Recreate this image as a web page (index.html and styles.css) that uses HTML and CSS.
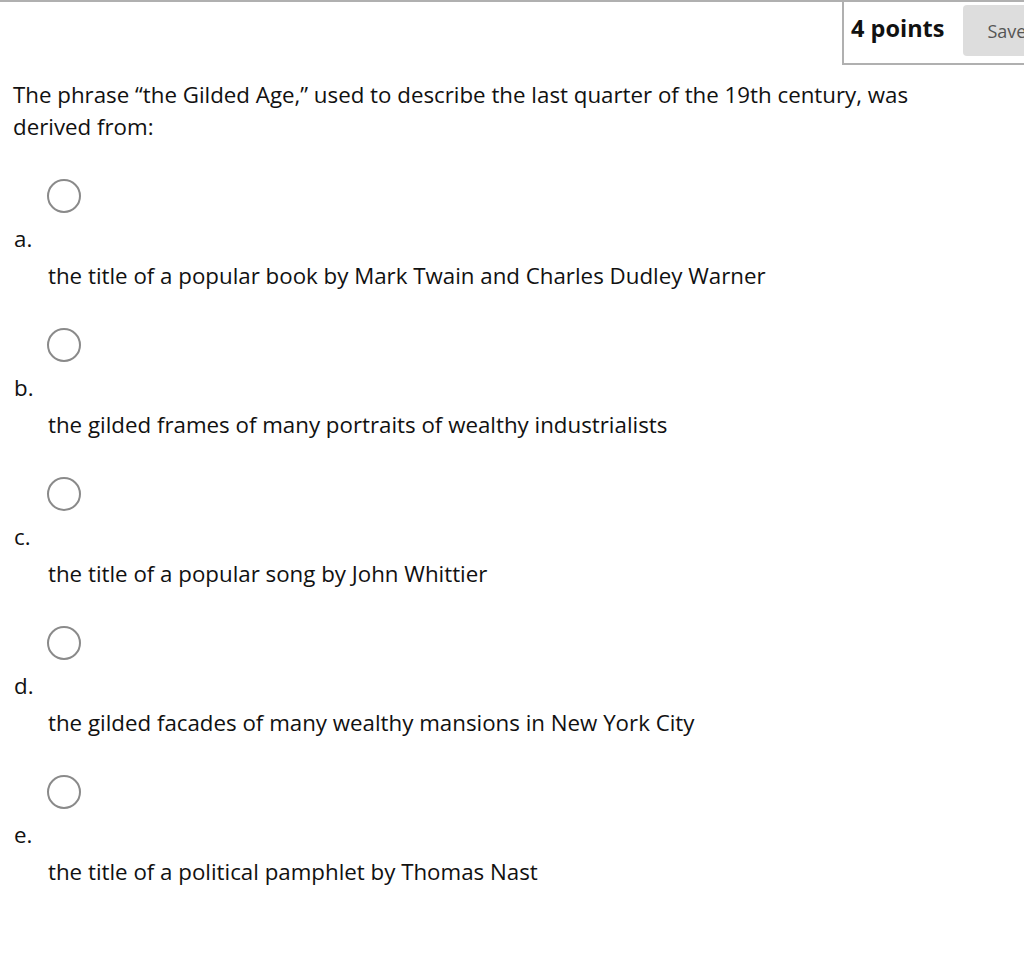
FILE: index.html
```html
<!DOCTYPE html>
<html>
<head>
<meta charset="utf-8">
<link rel="stylesheet" href="styles.css">
</head>
<body>
<div class="question">
  <div class="q-header">
    <div class="points-box">
      <span class="points">4 points</span>
      <button class="save-btn">Save Answer</button>
    </div>
  </div>
  <p class="q-text">The phrase “the Gilded Age,” used to describe the last quarter of the 19th century, was derived from:</p>
  <ul class="options">
    <li class="option">
      <span class="radio"></span>
      <div class="letter">a.</div>
      <div class="answer">the title of a popular book by Mark Twain and Charles Dudley Warner</div>
    </li>
    <li class="option">
      <span class="radio"></span>
      <div class="letter">b.</div>
      <div class="answer">the gilded frames of many portraits of wealthy industrialists</div>
    </li>
    <li class="option">
      <span class="radio"></span>
      <div class="letter">c.</div>
      <div class="answer">the title of a popular song by John Whittier</div>
    </li>
    <li class="option">
      <span class="radio"></span>
      <div class="letter">d.</div>
      <div class="answer">the gilded facades of many wealthy mansions in New York City</div>
    </li>
    <li class="option">
      <span class="radio"></span>
      <div class="letter">e.</div>
      <div class="answer">the title of a political pamphlet by Thomas Nast</div>
    </li>
  </ul>
</div>
</body>
</html>
```

FILE: styles.css
```css
html, body {
  margin: 0;
  padding: 0;
  background: #fff;
  overflow: hidden;
}
body {
  font-family: "Open Sans", "Liberation Sans", sans-serif;
  color: #111;
  width: 1024px;
}
.question {
  width: 1024px;
  overflow: hidden;
}
.q-header {
  border-top: 2px solid #b0b0b0;
  display: flex;
  justify-content: flex-start;
  padding-left: 842px;
  height: 63px;
  box-sizing: border-box;
}
.points-box {
  flex: none;
  display: flex;
  align-items: flex-start;
  border-left: 2px solid #b0b0b0;
  border-bottom: 2px solid #b0b0b0;
  margin-top: -2px;
  height: 65px;
  box-sizing: border-box;
  padding-left: 7px;
  white-space: nowrap;
  width: 300px;
}
.points {
  font-weight: 700;
  font-size: 23.5px;
  line-height: 30px;
  margin-top: 13px;
  color: #111;
}
.save-btn {
  margin-left: 19px;
  margin-top: 5px;
  height: 51px;
  border: none;
  border-radius: 4px;
  background: #dddddd;
  color: #555;
  font-family: "Open Sans", "Liberation Sans", sans-serif;
  font-size: 18px;
  padding: 0 24px 0 24px;
  text-align: left;
}
.q-text {
  margin: 16px 0 0 13px;
  width: 920px;
  font-size: 22.3px;
  line-height: 32px;
}
.options {
  list-style: none;
  margin: 0;
  padding: 0;
}
.option {
  padding-top: 36px;
}
.radio {
  display: block;
  width: 34px;
  height: 34px;
  box-sizing: border-box;
  border: 2px solid #8a8a8a;
  border-radius: 50%;
  margin-left: 47px;
}
.letter {
  margin: 10px 0 0 14px;
  font-size: 22.3px;
  line-height: 32px;
}
.answer {
  margin: 5px 0 0 48px;
  font-size: 22.3px;
  line-height: 32px;
}
```
